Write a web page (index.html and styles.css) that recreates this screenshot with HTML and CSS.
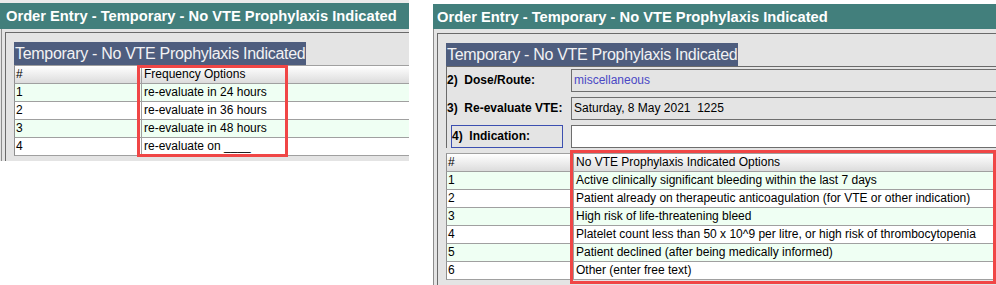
FILE: index.html
```html
<!DOCTYPE html>
<html>
<head>
    <title>Order Entry - Temporary - No VTE Prophylaxis Indicated</title>
    <link rel="stylesheet" href="styles.css">
</head>
<body>
    <div class="screen">
        <section class="window window-left">
            <div class="title">Order Entry - Temporary - No VTE Prophylaxis Indicated</div>
            <div class="body">
                <div class="frame">
                    <div class="caption">Temporary - No VTE Prophylaxis Indicated</div>
                    <div class="grid">
                        <div class="row head"><div class="cell">#</div><div class="cell">Frequency Options</div></div>
                        <div class="row"><div class="cell">1</div><div class="cell">re-evaluate in 24 hours</div></div>
                        <div class="row"><div class="cell">2</div><div class="cell">re-evaluate in 36 hours</div></div>
                        <div class="row"><div class="cell">3</div><div class="cell">re-evaluate in 48 hours</div></div>
                        <div class="row"><div class="cell">4</div><div class="cell">re-evaluate on ____</div></div>
                        <div class="highlight highlight-left"></div>
                    </div>
                </div>
            </div>
        </section>

        <section class="window window-right">
            <div class="title">Order Entry - Temporary - No VTE Prophylaxis Indicated</div>
            <div class="body">
                <div class="frame">
                    <div class="caption">Temporary - No VTE Prophylaxis Indicated</div>
                    <div class="form">
                        <div class="field-row">
                            <div class="label">2)  Dose/Route:</div>
                            <div class="field link">miscellaneous</div>
                        </div>
                        <div class="field-row">
                            <div class="label">3)  Re-evaluate VTE:</div>
                            <div class="field">Saturday, 8 May 2021  1225</div>
                        </div>
                        <div class="field-row">
                            <div class="label focus">4)  Indication:</div>
                            <div class="field input"></div>
                        </div>
                    </div>
                    <div class="grid">
                        <div class="row head"><div class="cell">#</div><div class="cell">No VTE Prophylaxis Indicated Options</div></div>
                        <div class="row"><div class="cell">1</div><div class="cell">Active clinically significant bleeding within the last 7 days</div></div>
                        <div class="row"><div class="cell">2</div><div class="cell">Patient already on therapeutic anticoagulation (for VTE or other indication)</div></div>
                        <div class="row"><div class="cell">3</div><div class="cell">High risk of life-threatening bleed</div></div>
                        <div class="row"><div class="cell">4</div><div class="cell">Platelet count less than 50 x 10^9 per litre, or high risk of thrombocytopenia</div></div>
                        <div class="row"><div class="cell">5</div><div class="cell">Patient declined (after being medically informed)</div></div>
                        <div class="row"><div class="cell">6</div><div class="cell">Other (enter free text)</div></div>
                        <div class="highlight highlight-right"></div>
                    </div>
                </div>
            </div>
        </section>
    </div>
</body>
</html>
```

FILE: styles.css
```css
* {
    box-sizing: border-box;
}
body {
    margin: 0;
    background: #fff;
    font-family: "Liberation Sans", Arial, sans-serif;
    overflow: hidden;
}
.screen {
    display: flex;
    gap: 24px;
    width: 996px;
    height: 285px;
    overflow: hidden;
}
.window {
    background: #e4e4e4;
    overflow: hidden;
    display: flex;
    flex-direction: column;
}
.window-left {
    width: 409px;
    height: 161px;
    border-top: 3px solid #ebebeb;
}
.window-right {
    flex: 1;
    margin-top: 4px;
    height: 281px;
}
.title {
    background: #427f7c;
    color: #fff;
    font-weight: bold;
    font-size: 14.7px;
    height: 26px;
    line-height: 27px;
    padding-left: 6px;
    white-space: nowrap;
    flex: none;
}
.window-right .title {
    height: 25px;
    line-height: 26px;
    padding-left: 4px;
}
.body {
    flex: 1;
    margin-left: 1px;
    border-left: 1px solid #8c8c8c;
    padding: 3px 0 0 3px;
}
.window-right .body {
    margin-left: 0;
    padding-top: 4px;
}
.frame {
    height: 100%;
    border-top: 1px solid #6a6a6a;
    border-left: 1px solid #6a6a6a;
    padding: 9px 0 0 8px;
}
.caption {
    width: max-content;
    height: 23px;
    line-height: 23px;
    padding: 0 1px;
    background: #4e5d7e;
    color: #f2f2f4;
    font-size: 16px;
    letter-spacing: -0.3px;
    white-space: nowrap;
}

/* option grid */
.grid {
    position: relative;
    font-size: 12px;
    color: #000;
}
.row {
    display: grid;
    grid-template-columns: 126px 1fr;
    height: 18px;
    line-height: 17px;
    background: #fff;
    border-left: 1px solid #909090;
    border-bottom: 1px solid #a0a0a0;
}
.row:nth-child(even) {
    background: #effff3;
}
.row.head {
    height: 19px;
    border-top: 1px solid #a0a0a0;
    background: linear-gradient(#ffffff, #dcdcdc);
}
.cell {
    padding-left: 1px;
    white-space: nowrap;
    overflow: hidden;
}
.cell + .cell {
    border-left: 1px solid #a0a0a0;
    padding-left: 2px;
}
.highlight {
    position: absolute;
    border: 3px solid #f04646;
}
.highlight-left {
    left: 123px;
    top: 0;
    width: 151px;
    height: 92px;
}
.highlight-right {
    left: 124px;
    top: -3px;
    width: 426px;
    height: 134px;
}

/* detail fields */
.form {
    border-top: 1px solid #6a6a6a;
    border-left: 1px solid #6a6a6a;
    padding-top: 2px;
    margin-right: -8px;
}
.field-row {
    display: grid;
    grid-template-columns: 124px 1fr;
    height: 23px;
    margin-bottom: 5px;
}
.label {
    font-size: 12px;
    font-weight: bold;
    line-height: 23px;
    white-space: pre;
}
.label.focus {
    margin-left: 4px;
    width: 112px;
    border: 1px solid #3c4fb0;
    line-height: 21px;
}
.field {
    border: 1px solid #6e6e6e;
    background: #e4e4e4;
    padding-left: 2px;
    font-size: 12px;
    line-height: 21px;
    white-space: pre;
}
.field.link {
    color: #4a48c4;
}
.field.input {
    background: #fff;
}
```
